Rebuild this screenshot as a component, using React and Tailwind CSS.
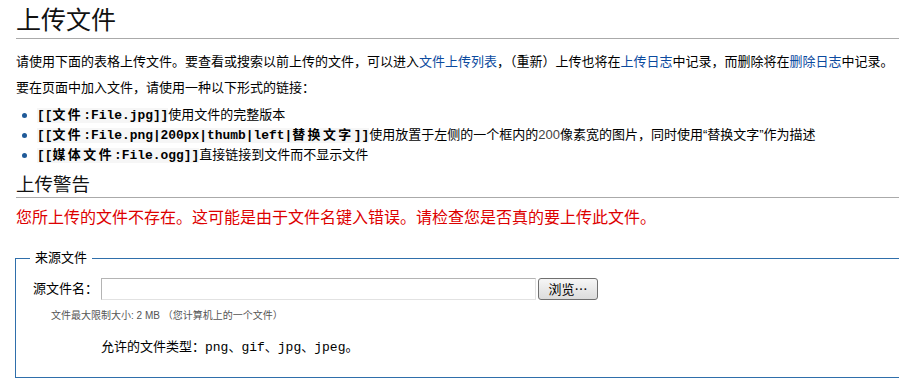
import React from "react";

const sans = { fontFamily: '"Liberation Sans", "Noto Sans CJK SC", sans-serif' };
const mono = { fontFamily: '"Liberation Mono", "Noto Sans CJK SC", monospace' };

const Code = ({ children }) => (
  <code className="font-bold bg-[#f6f6f6] text-[12.9px] text-black" style={mono}>
    {children}
  </code>
);

// CJK inside the code is set wider, like a double-width monospace cell
const Wide = ({ children }) => <span className="tracking-[2.5px]">{children}</span>;

const Bullet = ({ children }) => (
  <li className="flex items-center h-[20px]">
    <span className="w-[5px] h-[5px] rounded-full bg-[#1f5a99] ml-[6px] mr-[10px] shrink-0"></span>
    <span>{children}</span>
  </li>
);

const Link = ({ children }) => (
  <a href="#" className="text-[#0b4a9e]">
    {children}
  </a>
);

export default function App() {
  return (
    <div className="w-[899px] h-[390px] overflow-hidden bg-white text-black" style={sans}>
      <div className="w-[940px] pl-[16px] pt-[5px] text-[13px]">
        <h1 className="text-[25px] leading-[30px] font-normal text-[#111] border-b border-[#aaaaaa] pb-[3px]">
          上传文件
        </h1>

        <p className="mt-[13px] leading-[20px] whitespace-nowrap">
          请使用下面的表格上传文件。要查看或搜索以前上传的文件，可以进入
          <Link>文件上传列表</Link>，（重新）上传也将在<Link>上传日志</Link>
          中记录，而删除将在<Link>删除日志</Link>中记录。
        </p>
        <p className="mt-[6px] leading-[20px]">要在页面中加入文件，请使用一种以下形式的链接：</p>

        <ul className="mt-[7px]">
          <Bullet>
            <Code>
              [[<Wide>文件</Wide>:File.jpg]]
            </Code>
            使用文件的完整版本
          </Bullet>
          <Bullet>
            <Code>
              [[<Wide>文件</Wide>:File.png|200px|thumb|left|<Wide>替换文字</Wide>]]
            </Code>
            使用放置于左侧的一个框内的<span className="text-[#444]">200</span>像素宽的图片，同时使用“替换文字”作为描述
          </Bullet>
          <Bullet>
            <Code>
              [[<Wide>媒体文件</Wide>:File.ogg]]
            </Code>
            直接链接到文件而不显示文件
          </Bullet>
        </ul>

        <h2 className="mt-[8px] text-[18.5px] leading-[24px] font-normal text-[#111] border-b border-[#aaaaaa]">
          上传警告
        </h2>

        <p className="mt-[10px] text-[16px] leading-[20px] text-[#dd0000]">
          您所上传的文件不存在。这可能是由于文件名键入错误。请检查您是否真的要上传此文件。
        </p>

        <fieldset className="mt-[22px] ml-[-1px] border border-[#2f6fab] pb-[19px]">
          <legend className="ml-[14px] px-[5px] leading-[16px] text-[13px]">来源文件</legend>
          <div className="flex items-center pt-[12px] pl-[17px]">
            <label className="text-[13px] w-[68px]">源文件名：</label>
            <input
              type="text"
              className="w-[435px] h-[22px] border border-[#b4b4b4] border-b-[#e2e2e2] border-r-[#e2e2e2] bg-white"
            />
            <button
              className="ml-[2px] w-[60px] h-[22px] rounded-[3px] border border-[#707070] bg-gradient-to-b from-[#f6f6f6] to-[#dcdcdc] text-[13px] leading-[18px]"
              style={{ fontFamily: '"Noto Sans CJK SC", sans-serif' }}
            >
              浏览…
            </button>
          </div>
          <p className="mt-[9px] ml-[35px] text-[10px] leading-[14px] text-[#555]">
            文件最大限制大小: 2 MB （您计算机上的一个文件）
          </p>
          <p className="mt-[14px] ml-[85px] text-[13px] leading-[20px]">
            允许的文件类型：<span style={mono}>png、gif、jpg、jpeg。</span>
          </p>
        </fieldset>
      </div>
    </div>
  );
}
